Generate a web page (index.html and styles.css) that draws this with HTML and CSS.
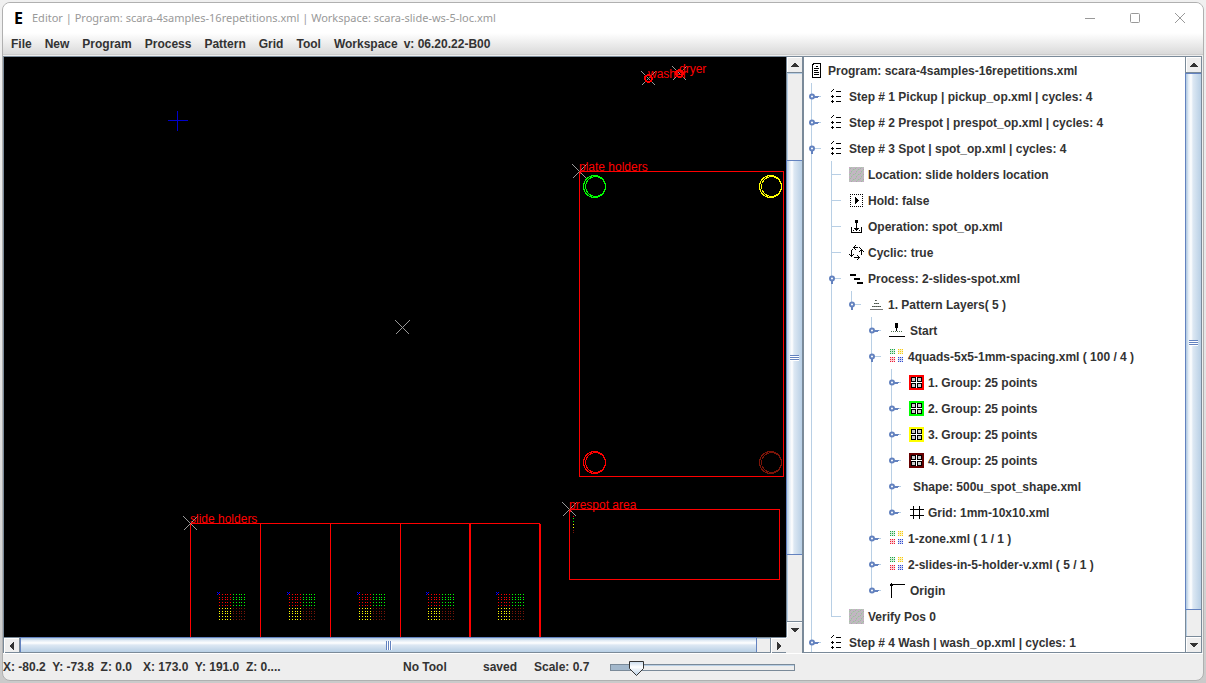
FILE: index.html
```html
<!DOCTYPE html>
<html lang="en">
<head>
<meta charset="utf-8">
<title>Editor</title>
<link rel="stylesheet" href="styles.css">
</head>
<body>
<svg class="defs" aria-hidden="true">
  <defs>
    <symbol id="closed" viewBox="0 0 20 26"><path d="M5 12.500h7" stroke="#b8cfe5"/><path d="M5 12.500h5M5 13.500h4" stroke="#6382bf"/><circle cx="3" cy="12.500" r="2" fill="#fff" stroke="#6382bf" stroke-width="2" shape-rendering="auto"/></symbol>
    <symbol id="open" viewBox="0 0 20 26"><path d="M5 12.500h7" stroke="#b8cfe5"/><path d="M2 15h2v3h-2z" fill="#6382bf"/><circle cx="3" cy="12.500" r="2" fill="#fff" stroke="#6382bf" stroke-width="2" shape-rendering="auto"/></symbol>
    <symbol id="leaf" viewBox="0 0 20 26"><path d="M3 12.500h9" stroke="#b8cfe5"/></symbol>
    <symbol id="doc" viewBox="0 0 15 15"><path d="M3.500 1.500l2-1h6v13q0 1-1 1h-6q-1 0-1-1z" fill="#fff" stroke="#000"/><path d="M7 3.500h2M5 5.500h5M5 7.500h4M5 9.500h5M5 11.500h5" stroke="#000"/></symbol>
    <symbol id="list" viewBox="0 0 16 15"><path d="M7 2.500h5M7 7.500h5M7 12.500h5M2 2.500h1M3 1.500h1M4 0.500h1M2 7.500h3M3.500 6v3M2 12.500h3M3.500 11v3" stroke="#000"/></symbol>
    <pattern id="grain" width="5" height="5" patternUnits="userSpaceOnUse"><path d="M0 0h5v5h-5z" fill="#bdbdbd"/><path d="M0 .5h1M3 1.500h1M1 3.500h1M4 4.500h1" stroke="#cba6cb"/><path d="M2 .5h1M0 2.500h1M3 3.500h1" stroke="#a7c8a9"/><path d="M1 1.500h1M4 2.500h1M2 4.500h1" stroke="#aaa"/></pattern>
    <symbol id="noise" viewBox="0 0 15 15"><path d="M0 0h15v15h-15z" fill="url(#grain)"/></symbol>
    <symbol id="hold" viewBox="0 0 15 15"><path d="M1 1.500h13M1 13.500h13M1.500 1v13M13.500 1v13" stroke="#000" stroke-dasharray="1 1"/><path d="M6 4h1v1h1v1h1v1h1v1h-1v1h-1v1h-1v1h-1z"/></symbol>
    <symbol id="oper" viewBox="0 0 15 15"><path d="M2.500 8v6M12.500 8v6M2 13.500h11M7.500 2v9M5 9.500h5" stroke="#000"/><path d="M6 1h3v3h-3zM5 9h5v1h-1v1h-1v1h-1v-1h-1v-1h-1z"/><path d="M4 11.500h7" stroke="#000" stroke-dasharray="1 2"/></symbol>
    <symbol id="cycle" viewBox="0 0 15 15"><path d="M4 2.500h5M5.500 1v3M6 .5h1M6 4.500h1M2.500 6v6M0 9.500h1M1 10.500h3M4 9.500h1M12.500 4v6M11 5.500h3M10 6.500h1M14 6.500h1M5 12.500h6M9.500 11v3M8 10.500h1M8 14.500h1M2 5.500h1M3 4.500h1M10 2.500h1M11 3.500h1" stroke="#000"/></symbol>
    <symbol id="proc" viewBox="0 0 15 15"><path d="M1 4h6M5 8h6M8 12h6" stroke="#000" stroke-width="2"/></symbol>
    <symbol id="layers" viewBox="0 0 15 15"><path d="M6 3.500h2M5 6.500h5M3 9.500h9M1 12.500h13" stroke="#777"/><path d="M6 3.500h2M5 6.500h5M3 9.500h9" stroke="#4a5a4a" stroke-dasharray="1 1"/></symbol>
    <symbol id="start" viewBox="0 0 17 15"><path d="M6 0h3v5h-1v3h-1v-3h-1z"/><path d="M2 8.500h12" stroke="#4a6a4a" stroke-dasharray="1 1"/><path d="M0 13.500h16" stroke="#000"/></symbol>
    <path id="dots9" d="M0 0h1v1h-1zm2 0h1v1h-1zm2 0h1v1h-1zm-4 2h1v1h-1zm2 0h1v1h-1zm2 0h1v1h-1zm-4 2h1v1h-1zm2 0h1v1h-1zm2 0h1v1h-1z"/>
    <symbol id="quads" viewBox="0 0 15 15">
      <path d="M1 0h5v5h-5z" fill="#d3eeda"/><path d="M9 0h5v5h-5z" fill="#fdf3c0"/><path d="M1 8h5v5h-5z" fill="#fbd0d5"/><path d="M9 8h5v5h-5z" fill="#d3d9f5"/>
      <use href="#dots9" x="1" fill="#22a447"/><use href="#dots9" x="9" fill="#f6c915"/><use href="#dots9" x="1" y="8" fill="#ed1c35"/><use href="#dots9" x="9" y="8" fill="#3049cc"/>
    </symbol>
    <symbol id="group" viewBox="0 0 15 15"><path d="M0 0h15v15h-15z" fill="currentColor"/><path d="M2 2h11v11h-11z" fill="#fff"/><path d="M2.500 2.500h4v4h-4zM8.500 2.500h4v4h-4zM2.500 8.500h4v4h-4zM8.500 8.500h4v4h-4z" fill="#ccc" stroke="#000"/></symbol>
    <symbol id="grid" viewBox="0 0 15 15"><path d="M4.500 1v13M10.500 1v13M1 4.500h14M1 10.500h14" stroke="#000"/></symbol>
    <symbol id="origin" viewBox="0 0 17 15"><path d="M2.500 0v15M1 1.500h15M1 2.500h3M2 3.500h1" stroke="#000"/></symbol>
    <symbol id="up" viewBox="0 0 8 4"><path d="M3 0h2v1h1v1h1v1h1v1h-8v-1h1v-1h1v-1h1z"/></symbol>
    <g id="cross"><path d="M-7-7L7 7M-7 7L7-7"/></g>
    <path id="dots5" d="M0 0h1v1h-1zm3 0h1v1h-1zm3 0h1v1h-1zm2 0h1v1h-1zm3 0h1v1h-1z"/>
    <g id="dots25"><use href="#dots5"/><use href="#dots5" y="3"/><use href="#dots5" y="5"/><use href="#dots5" y="8"/><use href="#dots5" y="11"/></g>
    <g id="spots">
      <use href="#dots25" fill="#f00"/><use href="#dots25" x="14" fill="#0f0"/><use href="#dots25" y="14" fill="#ff0"/><use href="#dots25" x="14" y="14" fill="#7a1408"/>
      <path d="M-2-2h1v1h-1zm2 0h1v1h-1zm-1 1h1v1h-1zm-1 1h1v1h-1z" fill="#00f"/>
    </g>
    <g id="well" fill="none"><circle r="11"/><circle cx="1" r="10"/></g>
  </defs>
</svg>
<div class="window">
  <header class="titlebar">
    <span class="logo">E</span>
    <h1 class="title">Editor | Program: scara-4samples-16repetitions.xml | Workspace: scara-slide-ws-5-loc.xml</h1>
    <button class="win-btn" aria-label="Minimize"><svg width="12" height="12"><path d="M1 6.500h10"/></svg></button>
    <button class="win-btn" aria-label="Maximize"><svg width="12" height="12"><rect x="1.500" y="1.500" width="9" height="9" rx="1"/></svg></button>
    <button class="win-btn" aria-label="Close"><svg width="12" height="12"><path d="M1 1l10 10M11 1L1 11"/></svg></button>
  </header>
  <nav class="menubar">
    <button>File</button><button>New</button><button>Program</button><button>Process</button><button>Pattern</button><button>Grid</button><button>Tool</button><button>Workspace</button><span class="version">v: 06.20.22-B00</span>
  </nav>
  <main class="panes">
    <section class="stage" aria-label="Workspace">
      <div class="canvas">
        <svg class="drawing">
          <g transform="translate(-3.500 -56.500)" fill="none" stroke="#f00">
            <path d="M167 120h20M177 110v20" stroke="#00c"/>
            <path d="M579 171h204v305h-204zM569 509h210v70h-210z"/>
            <path d="M190 700V523h349M260 523v177M330 523v177M400 523v177M469 523v177M470 523v177M539 523v177M540 523v177"/>
            <g stroke="#999">
              <use href="#cross" x="190" y="523"/><use href="#cross" x="579" y="171"/><use href="#cross" x="569" y="509"/>
              <use href="#cross" x="648" y="78"/><use href="#cross" x="679" y="73"/><use href="#cross" x="402" y="327"/>
            </g>
            <circle cx="648" cy="78" r="4"/><circle cx="648" cy="78" r="3"/><circle cx="679" cy="73" r="4"/><circle cx="679" cy="73" r="3"/>
            <use href="#well" x="594" y="186" stroke="#0f0"/><use href="#well" x="770" y="186" stroke="#ff0"/>
            <use href="#well" x="594" y="462"/><use href="#well" x="770" y="462" stroke="#7a1408"/>
          </g>
          <g transform="translate(-4 -57)">
            <use href="#spots" x="219" y="594"/><use href="#spots" x="289" y="594"/><use href="#spots" x="359" y="594"/><use href="#spots" x="428" y="594"/><use href="#spots" x="498" y="594"/>
            <path d="M573 516h1v1h-1z" fill="#f00"/><path d="M573 518h1v1h-1zm0 3h1v1h-1z" fill="#0f0"/><path d="M573 524h1v1h-1zm0 3h1v1h-1z" fill="#ff0"/><path d="M573 530h1v1h-1zm0 2h1v1h-1z" fill="#7a1408"/>
          </g>
          <g class="names" transform="translate(-4 -57)">
            <text x="190" y="523">slide holders</text><text x="579" y="171">plate holders</text><text x="569" y="509">prespot area</text>
            <text x="648" y="78">washer</text><text x="679" y="73">dryer</text>
          </g>
        </svg>
      </div>
      <div class="bar vertical">
        <button class="arrow" aria-label="Scroll up"><svg width="8" height="4"><use href="#up"/></svg></button>
        <div class="track"><i class="s87"></i><i class="thumb s395"></i><i class="s66"></i></div>
        <button class="arrow" aria-label="Scroll down"><svg class="down" width="8" height="4"><use href="#up"/></svg></button>
      </div>
      <div class="bar horizontal">
        <button class="arrow" aria-label="Scroll left"><svg class="left" width="8" height="4"><use href="#up"/></svg></button>
        <div class="track"><i class="thumb s737"></i><i class="s13"></i></div>
        <button class="arrow" aria-label="Scroll right"><svg class="right" width="8" height="4"><use href="#up"/></svg></button>
      </div>
    </section>
    <section class="side" aria-label="Program tree">
      <div class="tree">
        <div class="row"><svg class="icon"><use href="#doc"/></svg>Program: scara-4samples-16repetitions.xml</div>
        <ul class="top">
          <li><div class="row"><svg class="node"><use href="#closed"/></svg><svg class="icon step"><use href="#list"/></svg>Step # 1 Pickup | pickup_op.xml | cycles: 4</div></li>
          <li><div class="row"><svg class="node"><use href="#closed"/></svg><svg class="icon step"><use href="#list"/></svg>Step # 2 Prespot | prespot_op.xml | cycles: 4</div></li>
          <li><div class="row"><svg class="node"><use href="#open"/></svg><svg class="icon step"><use href="#list"/></svg>Step # 3 Spot | spot_op.xml | cycles: 4</div>
            <ul>
              <li><div class="row"><svg class="node"><use href="#leaf"/></svg><svg class="icon"><use href="#noise"/></svg>Location: slide holders location</div></li>
              <li><div class="row"><svg class="node"><use href="#leaf"/></svg><svg class="icon"><use href="#hold"/></svg>Hold: false</div></li>
              <li><div class="row"><svg class="node"><use href="#leaf"/></svg><svg class="icon"><use href="#oper"/></svg>Operation: spot_op.xml</div></li>
              <li><div class="row"><svg class="node"><use href="#leaf"/></svg><svg class="icon"><use href="#cycle"/></svg>Cyclic: true</div></li>
              <li><div class="row"><svg class="node"><use href="#open"/></svg><svg class="icon"><use href="#proc"/></svg>Process: 2-slides-spot.xml</div>
                <ul>
                  <li><div class="row"><svg class="node"><use href="#open"/></svg><svg class="icon"><use href="#layers"/></svg>1. Pattern Layers( 5 )</div>
                    <ul>
                      <li><div class="row"><svg class="node"><use href="#closed"/></svg><svg class="icon wide"><use href="#start"/></svg>Start</div></li>
                      <li><div class="row"><svg class="node"><use href="#open"/></svg><svg class="icon"><use href="#quads"/></svg>4quads-5x5-1mm-spacing.xml ( 100 / 4 )</div>
                        <ul>
                          <li><div class="row"><svg class="node"><use href="#closed"/></svg><svg class="icon red"><use href="#group"/></svg>1. Group: 25 points</div></li>
                          <li><div class="row"><svg class="node"><use href="#closed"/></svg><svg class="icon green"><use href="#group"/></svg>2. Group: 25 points</div></li>
                          <li><div class="row"><svg class="node"><use href="#closed"/></svg><svg class="icon yellow"><use href="#group"/></svg>3. Group: 25 points</div></li>
                          <li><div class="row"><svg class="node"><use href="#closed"/></svg><svg class="icon maroon"><use href="#group"/></svg>4. Group: 25 points</div></li>
                          <li><div class="row"><svg class="node"><use href="#closed"/></svg><span class="no-icon"></span>Shape: 500u_spot_shape.xml</div></li>
                          <li><div class="row"><svg class="node"><use href="#closed"/></svg><svg class="icon"><use href="#grid"/></svg>Grid: 1mm-10x10.xml</div></li>
                        </ul>
                      </li>
                      <li><div class="row"><svg class="node"><use href="#closed"/></svg><svg class="icon"><use href="#quads"/></svg>1-zone.xml ( 1 / 1 )</div></li>
                      <li><div class="row"><svg class="node"><use href="#closed"/></svg><svg class="icon"><use href="#quads"/></svg>2-slides-in-5-holder-v.xml ( 5 / 1 )</div></li>
                      <li><div class="row"><svg class="node"><use href="#closed"/></svg><svg class="icon wide"><use href="#origin"/></svg>Origin</div></li>
                    </ul>
                  </li>
                </ul>
              </li>
              <li><div class="row"><svg class="node"><use href="#leaf"/></svg><svg class="icon"><use href="#noise"/></svg>Verify Pos 0</div></li>
            </ul>
          </li>
          <li><div class="row"><svg class="node"><use href="#closed"/></svg><svg class="icon step"><use href="#list"/></svg>Step # 4 Wash | wash_op.xml | cycles: 1</div></li>
        </ul>
      </div>
      <div class="bar vertical">
        <button class="arrow" aria-label="Scroll tree up"><svg width="8" height="4"><use href="#up"/></svg></button>
        <div class="track"><i class="thumb s538"></i><i class="s26"></i></div>
        <button class="arrow" aria-label="Scroll tree down"><svg class="down" width="8" height="4"><use href="#up"/></svg></button>
      </div>
    </section>
  </main>
  <footer class="status">
    <span>X: -80.2&nbsp; Y: -73.8&nbsp; Z: 0.0</span>
    <span>X: 173.0&nbsp; Y: 191.0&nbsp; Z: 0....</span>
    <span>No Tool</span>
    <span>saved</span>
    <label for="scale">Scale: 0.7</label>
    <input id="scale" type="range" min="0" max="100" value="11">
  </footer>
</div>
</body>
</html>
```
FILE: styles.css
```css
* { box-sizing: border-box; }
html { height: 100%; background: #e4e4e4; }
body {
  height: 100vh;
  margin: 0;
  padding: 2px;
  background: linear-gradient(#f0f0f0, #e6e6e6 50%, #cacaca);
  color: #333;
  font: bold 12px/16px "Liberation Sans", Arial, sans-serif;
  overflow: hidden;
}
button { border: 0; padding: 0; background: none; color: inherit; font: inherit; }
.defs { position: absolute; width: 0; height: 0; }
svg { shape-rendering: crispEdges; flex: none; display: block; }

.window {
  display: flex;
  flex-direction: column;
  height: 100%;
  border: 1px solid #b0b0b0;
  border-radius: 8px;
  background: #eee;
  overflow: hidden;
}
.titlebar { display: flex; align-items: center; flex: none; height: 30px; padding-right: 1px; background: #fff; }
.logo { width: 29px; padding-left: 11px; color: #000; font: bold 16px/30px "Noto Sans", sans-serif; }
.title { flex: 1; margin: 0; color: #999; font: 11px/30px "Noto Sans", "Open Sans", sans-serif; white-space: nowrap; }
.win-btn { display: grid; place-items: center; width: 45px; height: 28px; }
.win-btn svg { fill: none; stroke: #999; shape-rendering: auto; }

.menubar {
  display: flex;
  flex: none;
  align-items: center;
  gap: 13px;
  height: 22px;
  padding-left: 8px;
  background: linear-gradient(#fff, #dadada);
  border-bottom: 1px solid #ccc;
}
.version { margin-left: -7px; }

.panes {
  display: grid;
  grid-template-columns: minmax(0, 1fr) 400px;
  flex: 1;
  min-height: 0;
  padding-top: 1px;
  border-bottom: 1px solid #fff;
}
.stage {
  display: grid;
  grid-template: minmax(0, 1fr) 16px / minmax(0, 1fr) 16px;
  border: 1px solid #7a8a99;
  border-left: 0;
  border-bottom: 0;
  min-height: 0;
}
.canvas { position: relative; overflow: hidden; background: #000; border-left: 1px solid #7a8a99; }
.drawing { position: absolute; inset: 0; width: 100%; height: 100%; }
.names { fill: #f00; font: 12px "Liberation Sans", Arial, sans-serif; }
.side {
  display: grid;
  grid-template-columns: minmax(0, 1fr) 16px;
  margin-right: 1px;
  border: 1px solid #7a8a99;
  min-height: 0;
}

.bar { display: flex; background: #eee; min-height: 0; }
.vertical { flex-direction: column; border-left: 1px solid #7a8a99; }
.horizontal { border-top: 1px solid #7a8a99; border-bottom: 1px solid #7a8a99; border-left: 1px solid #7a8a99; }
.arrow { display: grid; place-items: center; flex: none; width: 15px; height: 15px; border: 1px solid #fff; border-right: 0; border-bottom: 0; fill: #333; }
.down { transform: rotate(180deg); }
.left { transform: rotate(-90deg); }
.right { transform: rotate(90deg); }
.track { display: flex; flex: 1; min-width: 0; min-height: 0; border: 0 solid #7a8a99; }
.track i { position: relative; }
.vertical .track { flex-direction: column; border-width: 1px 0; box-shadow: inset 1px 1px #b8cfe5; }
.horizontal .track { border-width: 0 1px; box-shadow: inset 1px 1px #b8cfe5; }
.vertical .thumb { border: solid #6382bf; border-width: 1px 0 1px 1px; margin-left: -1px; background: linear-gradient(90deg, #b8cfe5 1px, #dde8f3 2px, #fff 5px, #dde8f3 7px, #b8cfe5); }
.horizontal .thumb { border: solid #6382bf; border-width: 1px 1px 0; margin-top: -1px; background: linear-gradient(#b8cfe5 1px, #dde8f3 2px, #fff 5px, #dde8f3 7px, #b8cfe5); }
.thumb::after { content: ""; position: absolute; }
.vertical .thumb::after { left: 3px; top: 50%; width: 9px; height: 6px; margin-top: -2px; background: repeating-linear-gradient(#6382bf 0 1px, #fff 1px 2px); }
.horizontal .thumb::after { top: 3px; left: 50%; width: 6px; height: 9px; margin-left: -3px; background: repeating-linear-gradient(90deg, #6382bf 0 1px, #fff 1px 2px); }
.s87 { flex: 87; }
.s395 { flex: 395; }
.s66 { flex: 66; }
.s737 { flex: 737; }
.s13 { flex: 13; }
.s538 { flex: 538; }
.s26 { flex: 26; }

.tree { overflow: hidden; padding: 1px 0 0 5px; background: #fff; }
.tree ul { margin: 0; padding: 0 0 0 20px; list-style: none; }
.tree .top { padding-left: 0; }
.tree li { position: relative; }
.tree li::before { content: ""; position: absolute; left: 2px; top: -1px; bottom: 0; width: 1px; background: #b8cfe5; }
.tree li:last-child::before { bottom: auto; height: 14px; }
.tree .top > li:last-child::before { height: 100%; }
.row { display: flex; align-items: center; height: 26px; white-space: nowrap; position: relative; }
.node { width: 20px; height: 26px; }
.icon { align-self: flex-start; width: 15px; height: 15px; margin: 5px 4px 0 0; }
.step { width: 16px; }
.wide { width: 17px; }
.no-icon { width: 4px; }
.red { color: #f00; }
.green { color: #0f0; }
.yellow { color: #ff0; }
.maroon { color: #600; }

.status {
  display: grid;
  grid-template-columns: 140px 260px 80px 51px 76px 185px;
  flex: none;
  align-items: center;
  height: 26px;
  white-space: nowrap;
}
input[type="range"] { width: 185px; height: 16px; margin: 0; appearance: none; background: none; }
input[type="range"]::-webkit-slider-runnable-track {
  height: 7px;
  border: 1px solid #7a8a99;
  background: linear-gradient(90deg, #a3b8cc 0 24px, transparent 24px), linear-gradient(#b8cfe5 1px, #eee 1px);
}
input[type="range"]::-webkit-slider-thumb {
  appearance: none;
  width: 15px;
  height: 15px;
  margin-top: -4px;
  background: url("data:image/svg+xml,%3Csvg xmlns='http://www.w3.org/2000/svg' width='15' height='15'%3E%3ClinearGradient id='g' x2='0' y2='1'%3E%3Cstop stop-color='%23c8daec'/%3E%3Cstop offset='.4' stop-color='%23fff'/%3E%3Cstop offset='1' stop-color='%23b8cfe5'/%3E%3C/linearGradient%3E%3Cpath d='M.5.5h14v7l-7 7-7-7z' fill='url(%23g)' stroke='%23333'/%3E%3C/svg%3E");
}
```
